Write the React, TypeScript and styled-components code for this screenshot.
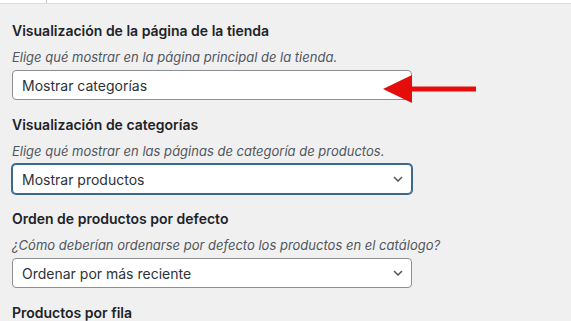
import React from "react";
import styled, { createGlobalStyle } from "styled-components";

const Global = createGlobalStyle`
  html, body { margin: 0; padding: 0; background: #f0f0f1; }
  body { font-family: Inter, "Noto Sans", "Liberation Sans", sans-serif; color: #1d2327; overflow: hidden; }
  * { box-sizing: border-box; }
`;

const Page = styled.div`
  width: 571px;
  height: 321px;
  overflow: hidden;
  background: #f0f0f1;
`;

const TopBar = styled.div`
  height: 4px;
  background: #fff;
  border-bottom: 1px solid #dcdcde;
  display: flex;
`;

const TopTab = styled.div`
  width: 47px;
  border-right: 1px solid #c3c4c7;
`;

const Content = styled.div`
  padding: 17px 12px 0 12px;
`;

const Field = styled.div`
  position: relative;
  display: flex;
  flex-direction: column;
  width: 400px;
  padding-bottom: 15px;
`;

const Heading = styled.div`
  font-size: 14px;
  font-weight: 600;
  line-height: 20px;
  color: #1d2327;
  white-space: nowrap;
`;

const Description = styled.div`
  margin-top: 7px;
  font-size: 13px;
  font-style: italic;
  line-height: 18px;
  color: #50575e;
  white-space: nowrap;
`;

const Box = styled.div<{ $focused?: boolean }>`
  margin-top: 4px;
  height: 30px;
  width: 400px;
  display: flex;
  align-items: center;
  justify-content: space-between;
  padding: 0 8px 0 9px;
  background: #fff;
  border: 1px solid ${(p) => (p.$focused ? "#3b6a8e" : "#8c8f94")};
  box-shadow: ${(p) => (p.$focused ? "0 0 0 1px #3b6a8e" : "none")};
  border-radius: 4px;
  font-size: 14px;
  color: #2c3338;
`;

const Chevron = styled.svg`
  width: 10px;
  height: 6px;
  flex: none;
`;

const Arrow = styled.svg`
  position: absolute;
  left: 371px;
  top: 53px;
  width: 94px;
  height: 30px;
  overflow: visible;
`;

const ChevronIcon = () => (
  <Chevron viewBox="0 0 10 6">
    <path d="M1 1 L5 5 L9 1" fill="none" stroke="#50575e" strokeWidth="1.5" />
  </Chevron>
);

type FieldProps = {
  title: string;
  desc?: string;
  value?: string;
  select?: boolean;
  focused?: boolean;
  children?: React.ReactNode;
};

const SettingField = ({ title, desc, value, select, focused, children }: FieldProps) => (
  <Field>
    <Heading>{title}</Heading>
    {desc && <Description>{desc}</Description>}
    {value && (
      <Box $focused={focused}>
        <span>{value}</span>
        {select && <ChevronIcon />}
      </Box>
    )}
    {children}
  </Field>
);

export default function App() {
  return (
    <Page>
      <Global />
      <TopBar>
        <TopTab />
      </TopBar>
      <Content>
        <SettingField
          title="Visualización de la página de la tienda"
          desc="Elige qué mostrar en la página principal de la tienda."
          value="Mostrar categorías"
        >
          <Arrow viewBox="0 0 94 30">
            <polygon points="0,15 29,1 29,29" fill="#e50c0c" />
            <rect x="28" y="12.5" width="65" height="5" fill="#e50c0c" />
          </Arrow>
        </SettingField>
        <SettingField
          title="Visualización de categorías"
          desc="Elige qué mostrar en las páginas de categoría de productos."
          value="Mostrar productos"
          select
          focused
        />
        <SettingField
          title="Orden de productos por defecto"
          desc="¿Cómo deberían ordenarse por defecto los productos en el catálogo?"
          value="Ordenar por más reciente"
          select
        />
        <SettingField title="Productos por fila" />
      </Content>
    </Page>
  );
}
